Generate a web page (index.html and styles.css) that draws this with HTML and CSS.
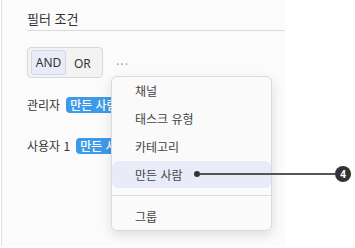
FILE: index.html
```html
<!DOCTYPE html>
<html lang="ko">
<head>
<meta charset="utf-8">
<link rel="stylesheet" href="styles.css">
</head>
<body>
<div class="panel">
  <div class="title">필터 조건</div>
  <div class="ops">
    <div class="seg">
      <span class="seg-btn active">AND</span>
      <span class="seg-btn">OR</span>
    </div>
    <span class="more">···</span>
  </div>
  <div class="row"><span class="label">관리자</span><span class="tag">만든 사람</span></div>
  <div class="row"><span class="label">사용자 1</span><span class="tag">만든 사람</span></div>

  <div class="menu">
    <div class="item">채널</div>
    <div class="item">태스크 유형</div>
    <div class="item">카테고리</div>
    <div class="item hl">만든 사람</div>
    <div class="divider"></div>
    <div class="item">그룹</div>
  </div>
</div>
<div class="callout">
  <span class="dot"></span>
  <span class="line"></span>
  <span class="badge">4</span>
</div>
</body>
</html>
```
FILE: styles.css
```css
html, body {
  margin: 0;
  padding: 0;
  background: #ffffff;
}
body {
  font-family: "Noto Sans CJK KR", "Noto Sans", sans-serif;
  color: #333;
  width: 355px;
  height: 248px;
  overflow: hidden;
  position: relative;
}
.panel {
  margin-left: 1px;
  width: 258px;
  height: 246px;
  background: #fbfbfb;
  border-left: 1px solid #dedede;
  padding-left: 25px;
  position: relative;
}
.title {
  padding-top: 9px;
  line-height: 20px;
  font-size: 13px;
  border-bottom: 1px solid #dcdcdc;
  box-sizing: border-box;
  height: 31px;
}
.ops {
  display: flex;
  align-items: center;
  margin-top: 16px;
  gap: 13px;
}
.seg {
  display: flex;
  align-items: center;
  height: 31px;
  box-sizing: border-box;
  width: 76px;
  border: 1px solid #d8d8d8;
  border-radius: 4px;
  background: #f3f3f3;
  padding: 0 3px;
  gap: 2px;
}
.seg-btn {
  font-family: "Noto Sans", sans-serif;
  font-size: 12px;
  height: 25px;
  line-height: 25px;
  padding: 0 5px;
  box-sizing: border-box;
  border: 1px solid transparent;
  border-radius: 3px;
  color: #333;
}
.seg-btn.active {
  background: #e9ebf8;
  border-color: #d3d6e6;
  width: 35px;
  text-align: center;
  padding: 0;
  line-height: 23px;
}
.more {
  color: #8b9fbf;
  font-size: 12px;
  letter-spacing: 1px;
  margin-top: 2px;
}
.row {
  display: flex;
  align-items: center;
  height: 41px;
  font-size: 12px;
}
.ops + .row { margin-top: 6px; }
.label {
  margin-right: 6px;
}
.tag {
  background: #3d9ae8;
  color: #fff;
  border-radius: 4px;
  height: 16px;
  line-height: 16px;
  padding: 0 4px;
  font-size: 12px;
  font-weight: 500;
}
.menu {
  position: absolute;
  left: 109px;
  top: 76px;
  width: 161px;
  box-sizing: border-box;
  background: #fafafa;
  border: 1px solid #dadada;
  border-radius: 6px;
  box-shadow: 0 4px 12px rgba(0,0,0,0.12);
  display: flex;
  flex-direction: column;
  gap: 1px;
}
.item {
  height: 27px;
  line-height: 27px;
  padding-left: 23px;
  font-size: 12px;
  color: #444;
  border-radius: 6px;
}
.item.hl {
  background: #e9ebf9;
}
.divider {
  height: 1px;
  background: #dcdcdc;
  margin: 6px 0;
}
.callout {
  position: absolute;
  left: 194px;
  top: 166px;
  display: flex;
  align-items: center;
  height: 16px;
}
.dot {
  width: 6px;
  height: 6px;
  border-radius: 50%;
  background: #333;
}
.line {
  width: 135px;
  height: 1.5px;
  background: #555;
}
.badge {
  width: 16px;
  height: 16px;
  border-radius: 50%;
  background: #333;
  color: #fff;
  font-family: "Noto Sans", sans-serif;
  font-weight: 700;
  font-size: 10px;
  line-height: 16px;
  text-align: center;
}
```
